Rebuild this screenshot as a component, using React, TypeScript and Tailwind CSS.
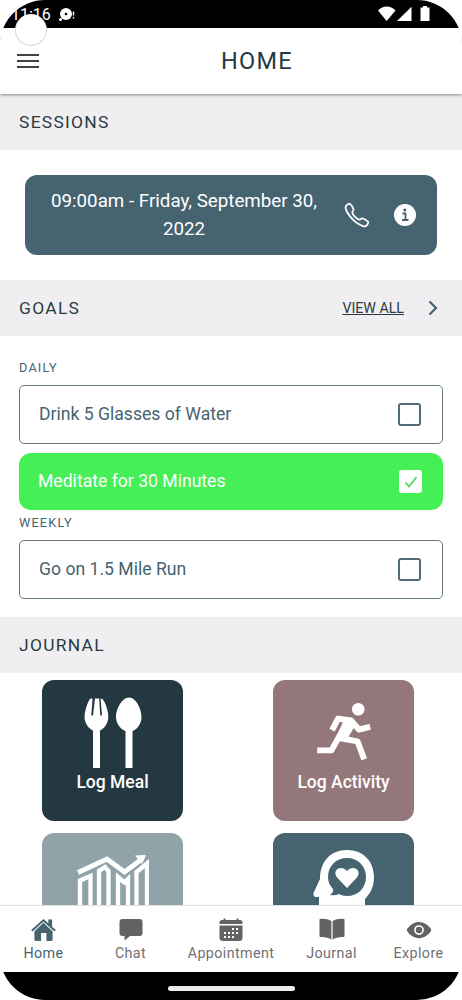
import React from "react";
import { IoCallOutline, IoEye } from "react-icons/io5";

const StatusBar = () => {
  return (
    <div className="h-7 shrink-0 bg-black text-white relative flex items-start justify-between">
      <div className="flex items-center pl-[11px] pt-[5px]">
        <span className="text-[16px] leading-5 w-[40px]">11:16</span>
        <svg viewBox="0 0 18 16" className="w-[18px] h-4 ml-[6px] -mt-[2px]">
          <circle cx="9" cy="8" r="6" fill="#fff" />
          <circle cx="9" cy="8" r="1.3" fill="#000" />
          <circle cx="3.5" cy="13.5" r="1.5" fill="#fff" />
          <path d="M16.5 5.5v4M16.5 11v1.5" stroke="#fff" strokeWidth="1.4" />
        </svg>
      </div>
      <svg viewBox="0 0 52 16" className="w-[52px] h-4 mt-1.5 mr-[32px]" fill="#fff">
        <path d="M0 4.500C5-1 12.500-1 17.500 4.500L8.700 15z" />
        <path d="M33.500 .7V15H19z" />
        <path d="M45 0h4v1.500h2.500V15H42.500V1.500H45z" />
      </svg>
      <div className="absolute left-[15px] top-[14px] size-8 rounded-full bg-white border border-[#d8d8d8] border-t-transparent z-20"></div>
    </div>
  );
};

const Header = () => {
  return (
    <div className="h-[66px] shrink-0 bg-white relative z-10 shadow-[0_1px_3px_rgba(0,0,0,0.45)] flex items-center">
      <div className="ml-[17px] w-[22px] flex flex-col gap-[4px]">
        <span className="h-[2px] bg-[#474245]"></span>
        <span className="h-[2px] bg-[#474245]"></span>
        <span className="h-[2px] bg-[#474245]"></span>
      </div>
      <h1 className="flex-1 text-center text-[23.5px] tracking-[1.25px] pt-[1px] pl-[13px] text-[#243941]">HOME</h1>
    </div>
  );
};

type SectionBarProps = { title: string; children?: React.ReactNode };

const SectionBar = ({ title, children }: SectionBarProps) => {
  return (
    <div className="h-14 shrink-0 bg-[#f0eef1] pl-[19px] pr-[24px] flex items-center justify-between">
      <h2 className="text-[17.4px] tracking-[1.3px] text-[#293b42]">{title}</h2>
      {children}
    </div>
  );
};

type GoalProps = { label: string; done?: boolean };

const Goal = ({ label, done }: GoalProps) => {
  if (done) {
    return (
      <div className="h-[57px] mt-[9px] rounded-[12px] bg-[#44f056] text-white pl-[19px] pr-[21px] flex items-center justify-between">
        <span className="text-[17.6px]">{label}</span>
        <span className="size-[23px] rounded-[3px] bg-white flex items-center justify-center">
          <svg viewBox="0 0 12 12" className="size-3" fill="none" stroke="#44d95a" strokeWidth="1.6">
            <path d="M.5 6.500L4 10.500L11.500 1" />
          </svg>
        </span>
      </div>
    );
  }
  return (
    <div className="h-[59px] rounded-[5px] border border-[#657882] text-[#466370] pl-[19px] pr-[21px] flex items-center justify-between">
      <span className="text-[17.6px]">{label}</span>
      <span className="size-[23px] rounded-[3px] border-2 border-[#516b78]"></span>
    </div>
  );
};

const MealIcon = () => (
  <svg viewBox="0 0 58 72" className="w-[58px] h-[72px]" fill="#fff">
    <path d="M5.500 2.500Q7 1 8.500 1.800L7.300 18.500H9L11 1.500H15.200L16.200 18.500H18L16.600 1.600Q18.800 1.500 20.500 5C22.500 9 24.300 15 24.300 20C24.300 26 20 32 16 33.500V71H9V33.500C5 32 .5 26 .5 20C.5 15 2.500 8 5.500 2.500z" />
    <path d="M45 .5C52 .5 57.500 12 57.500 20C57.500 27 53 32.500 48.500 34V71H41.500V34C37 32.500 32 27 32 20C32 12 38 .5 45 .5z" />
  </svg>
);

const RunIcon = () => (
  <svg viewBox="0 0 162 172" className="w-[54px] h-[57px]" fill="none" stroke="#fff" strokeWidth="18">
    <circle cx="124" cy="19" r="19" fill="#fff" stroke="none" />
    <path d="M45 82L63 47L102 53L126 80L160 72" strokeLinejoin="round" />
    <path d="M84 42L112 50L116 66L92 106L66 118L60 100z" fill="#fff" stroke="none" />
    <path d="M0 143H43L92 56" strokeLinejoin="round" />
    <path d="M74 107L122 116L142 170" strokeLinejoin="round" />
  </svg>
);

const ChartIcon = () => (
  <svg viewBox="0 0 72 72" className="w-[72px] h-[72px]" fill="none" stroke="#fff" strokeWidth="4.3">
    <path d="M1 17.500L30 4L47.500 17L65 4" strokeWidth="4.8" />
    <path d="M58 .5L69 0L65 9z" fill="#fff" stroke="none" />
    <path d="M3 72V25.500L13.500 21V72" />
    <path d="M22 72V16L28 12L31.500 16V72" />
    <path d="M41 72V22L47.500 27.500L51 24V72" />
    <path d="M59.500 72V17L70 8.500V72" />
  </svg>
);

const MindIcon = () => (
  <svg viewBox="0 0 62 72" className="w-[62px] h-[72px]">
    <path d="M34 0C51 0 61 12 61 27C61 37 57 44 52 49V72H6V47H2Q0 46 .5 43L7 29C7 12 17 0 34 0z" fill="#fff" />
    <path d="M34 8C45 8 53 16 53 27C53 38 45 46 34 46C31 46 28 45 26 44Q22 46 17 45Q21 42 20 39C17 36 15 32 15 27C15 16 23 8 34 8z" fill="#466370" />
    <path d="M34 38L24.500 28C18 20.500 28 14 34 21C40 14 50 20.500 43.500 28z" fill="#fff" />
  </svg>
);

const HomeIcon = () => (
  <svg viewBox="0 0 26 24" className="w-[25px] h-6" fill="#466370">
    <path d="M18 1H22V9L18 6z" />
    <path d="M3.500 13L13 4L22.500 13V21.500Q22.500 23.500 20.500 23.500H16V15H10.500V23.500H5.500Q3.500 23.500 3.500 21.500z" />
    <path d="M2.800 13.800L13 4.200L23.200 13.800" fill="none" stroke="#fff" strokeWidth=".7" />
    <path d="M1.500 12.300L13 1.800L24.500 12.300" fill="none" stroke="#466370" strokeWidth="2" strokeLinecap="round" />
  </svg>
);

const ChatIcon = () => (
  <svg viewBox="0 0 24 24" className="size-6" fill="#646265">
    <path d="M3.500 1H20.500Q23.500 1 23.500 4V15Q23.500 18 20.500 18H11L5.500 22.500V18H3.500Q.5 18 .5 15V4Q.5 1 3.500 1z" />
  </svg>
);

const CalendarIcon = () => (
  <svg viewBox="0 0 24 24" className="size-6" fill="#646265">
    <path d="M.5 6V4.500Q.5 2 3 2H4.500V.5H6.500V2H17.500V.5H19.500V2H21Q23.500 2 23.500 4.500V6z" />
    <path d="M.5 7.500H23.500V19.500Q23.500 23 20 23H4Q.5 23 .5 19.500z" />
    <path d="M13 11H15M17 11H19M5 15H7M9 15H11M13 15H15M17 15H19M5 19H7M9 19H11M13 19H15" stroke="#fff" strokeWidth="2" />
  </svg>
);

const BookIcon = () => (
  <svg viewBox="0 0 26 22" className="w-[26px] h-[22px]" fill="#646265">
    <path d="M1 1C5 .5 9 1 12.400 3V21.500C9 19.500 5 19 1.500 19Q.5 19 .5 18V2Q.5 1 1 1z" />
    <path d="M25 1C21 .5 17 1 13.600 3V21.500C17 19.500 21 19 24.500 19Q25.500 19 25.500 18V2Q25.500 1 25 1z" />
  </svg>
);

export default function App() {
  return (
    <div className="w-[462px] h-[1000px] bg-white">
      <div className="h-full rounded-[45px] overflow-hidden flex flex-col font-[Roboto,sans-serif]">
        <StatusBar />
        <Header />

        <div className="flex-1 min-h-0 overflow-hidden bg-white flex flex-col">
          <SectionBar title="SESSIONS" />
          <div className="mx-[25px] mt-[25px] mb-[25px] h-[80px] shrink-0 rounded-[12px] bg-[#466370] text-white flex items-center">
            <p className="ml-[20px] w-[278px] shrink-0 text-center text-[18.75px] leading-7 pb-px">
              09:00am - Friday, September 30, 2022
            </p>
            <IoCallOutline size={28} className="ml-[20px] shrink-0" />
            <svg viewBox="0 0 22 22" className="ml-[23px] size-[22px] shrink-0">
              <circle cx="11" cy="11" r="11" fill="#fff" />
              <circle cx="10.8" cy="6" r="1.6" fill="#466370" />
              <path d="M8.500 9.500H11.500V15.500M8 16H14.500" fill="none" stroke="#466370" strokeWidth="1.8" />
            </svg>
          </div>

          <SectionBar title="GOALS">
            <div className="flex items-center">
              <a href="#" className="pt-px text-[14.2px] text-[#293b42] underline underline-offset-1">
                VIEW ALL
              </a>
              <svg viewBox="0 0 10 14" className="ml-[24px] w-[10px] h-[14px]" fill="none" stroke="#466370" strokeWidth="2.2">
                <path d="M1.500 .5L8 7L1.500 13.500" />
              </svg>
            </div>
          </SectionBar>
          <div className="px-[19px] pt-[22px] pb-[18px] shrink-0">
            <h3 className="text-[12.7px] leading-5 tracking-[1.2px] text-[#466370] mb-[7px]">DAILY</h3>
            <Goal label="Drink 5 Glasses of Water" />
            <Goal label="Meditate for 30 Minutes" done />
            <h3 className="text-[12.7px] leading-5 tracking-[1.2px] text-[#466370] mt-[3px] mb-[7px]">WEEKLY</h3>
            <Goal label="Go on 1.5 Mile Run" />
          </div>

          <SectionBar title="JOURNAL" />
          <div className="grid grid-cols-[141px_141px] gap-x-[90px] gap-y-3 pl-[42px] pt-[7px] shrink-0 text-white text-[17.5px] font-medium">
            <div className="h-[141px] rounded-[12px] bg-[#243841] flex flex-col items-center pt-[17px]">
              <MealIcon />
              <span className="leading-[26px]">Log Meal</span>
            </div>
            <div className="h-[141px] rounded-[12px] bg-[#93777a] flex flex-col items-center pt-[23px]">
              <RunIcon />
              <span className="leading-[26px] mt-[9px]">Log Activity</span>
            </div>
            <div className="h-[141px] rounded-[12px] bg-[#90a3a9] flex flex-col items-center pt-[22px]">
              <ChartIcon />
            </div>
            <div className="h-[141px] rounded-[12px] bg-[#466370] flex flex-col items-center pt-[17px]">
              <MindIcon />
            </div>
          </div>
        </div>

        <div className="h-[67px] shrink-0 bg-white border-t border-[#dddfe1] flex text-[14.3px] tracking-[0.4px] text-[#707073] text-center">
          <div className="w-[87px] flex flex-col items-center pt-[12px] text-[#466370]">
            <HomeIcon />
            <span className="leading-[22px]">Home</span>
          </div>
          <div className="w-[87px] flex flex-col items-center pt-[12px]">
            <ChatIcon />
            <span className="leading-[22px]">Chat</span>
          </div>
          <div className="w-[114px] flex flex-col items-center pt-[12px]">
            <CalendarIcon />
            <span className="leading-[22px]">Appointment</span>
          </div>
          <div className="w-[87px] flex flex-col items-center pt-[12px]">
            <BookIcon />
            <span className="leading-[22px] mt-[2px]">Journal</span>
          </div>
          <div className="w-[87px] flex flex-col items-center pt-[11px]">
            <IoEye size={26} color="#646265" className="-mb-px" />
            <span className="leading-[22px]">Explore</span>
          </div>
        </div>
        <div className="h-7 shrink-0 bg-black flex justify-center items-center pt-[5px]">
          <div className="w-[127px] h-[5px] rounded-full bg-[#ececef]"></div>
        </div>
      </div>
    </div>
  );
}
